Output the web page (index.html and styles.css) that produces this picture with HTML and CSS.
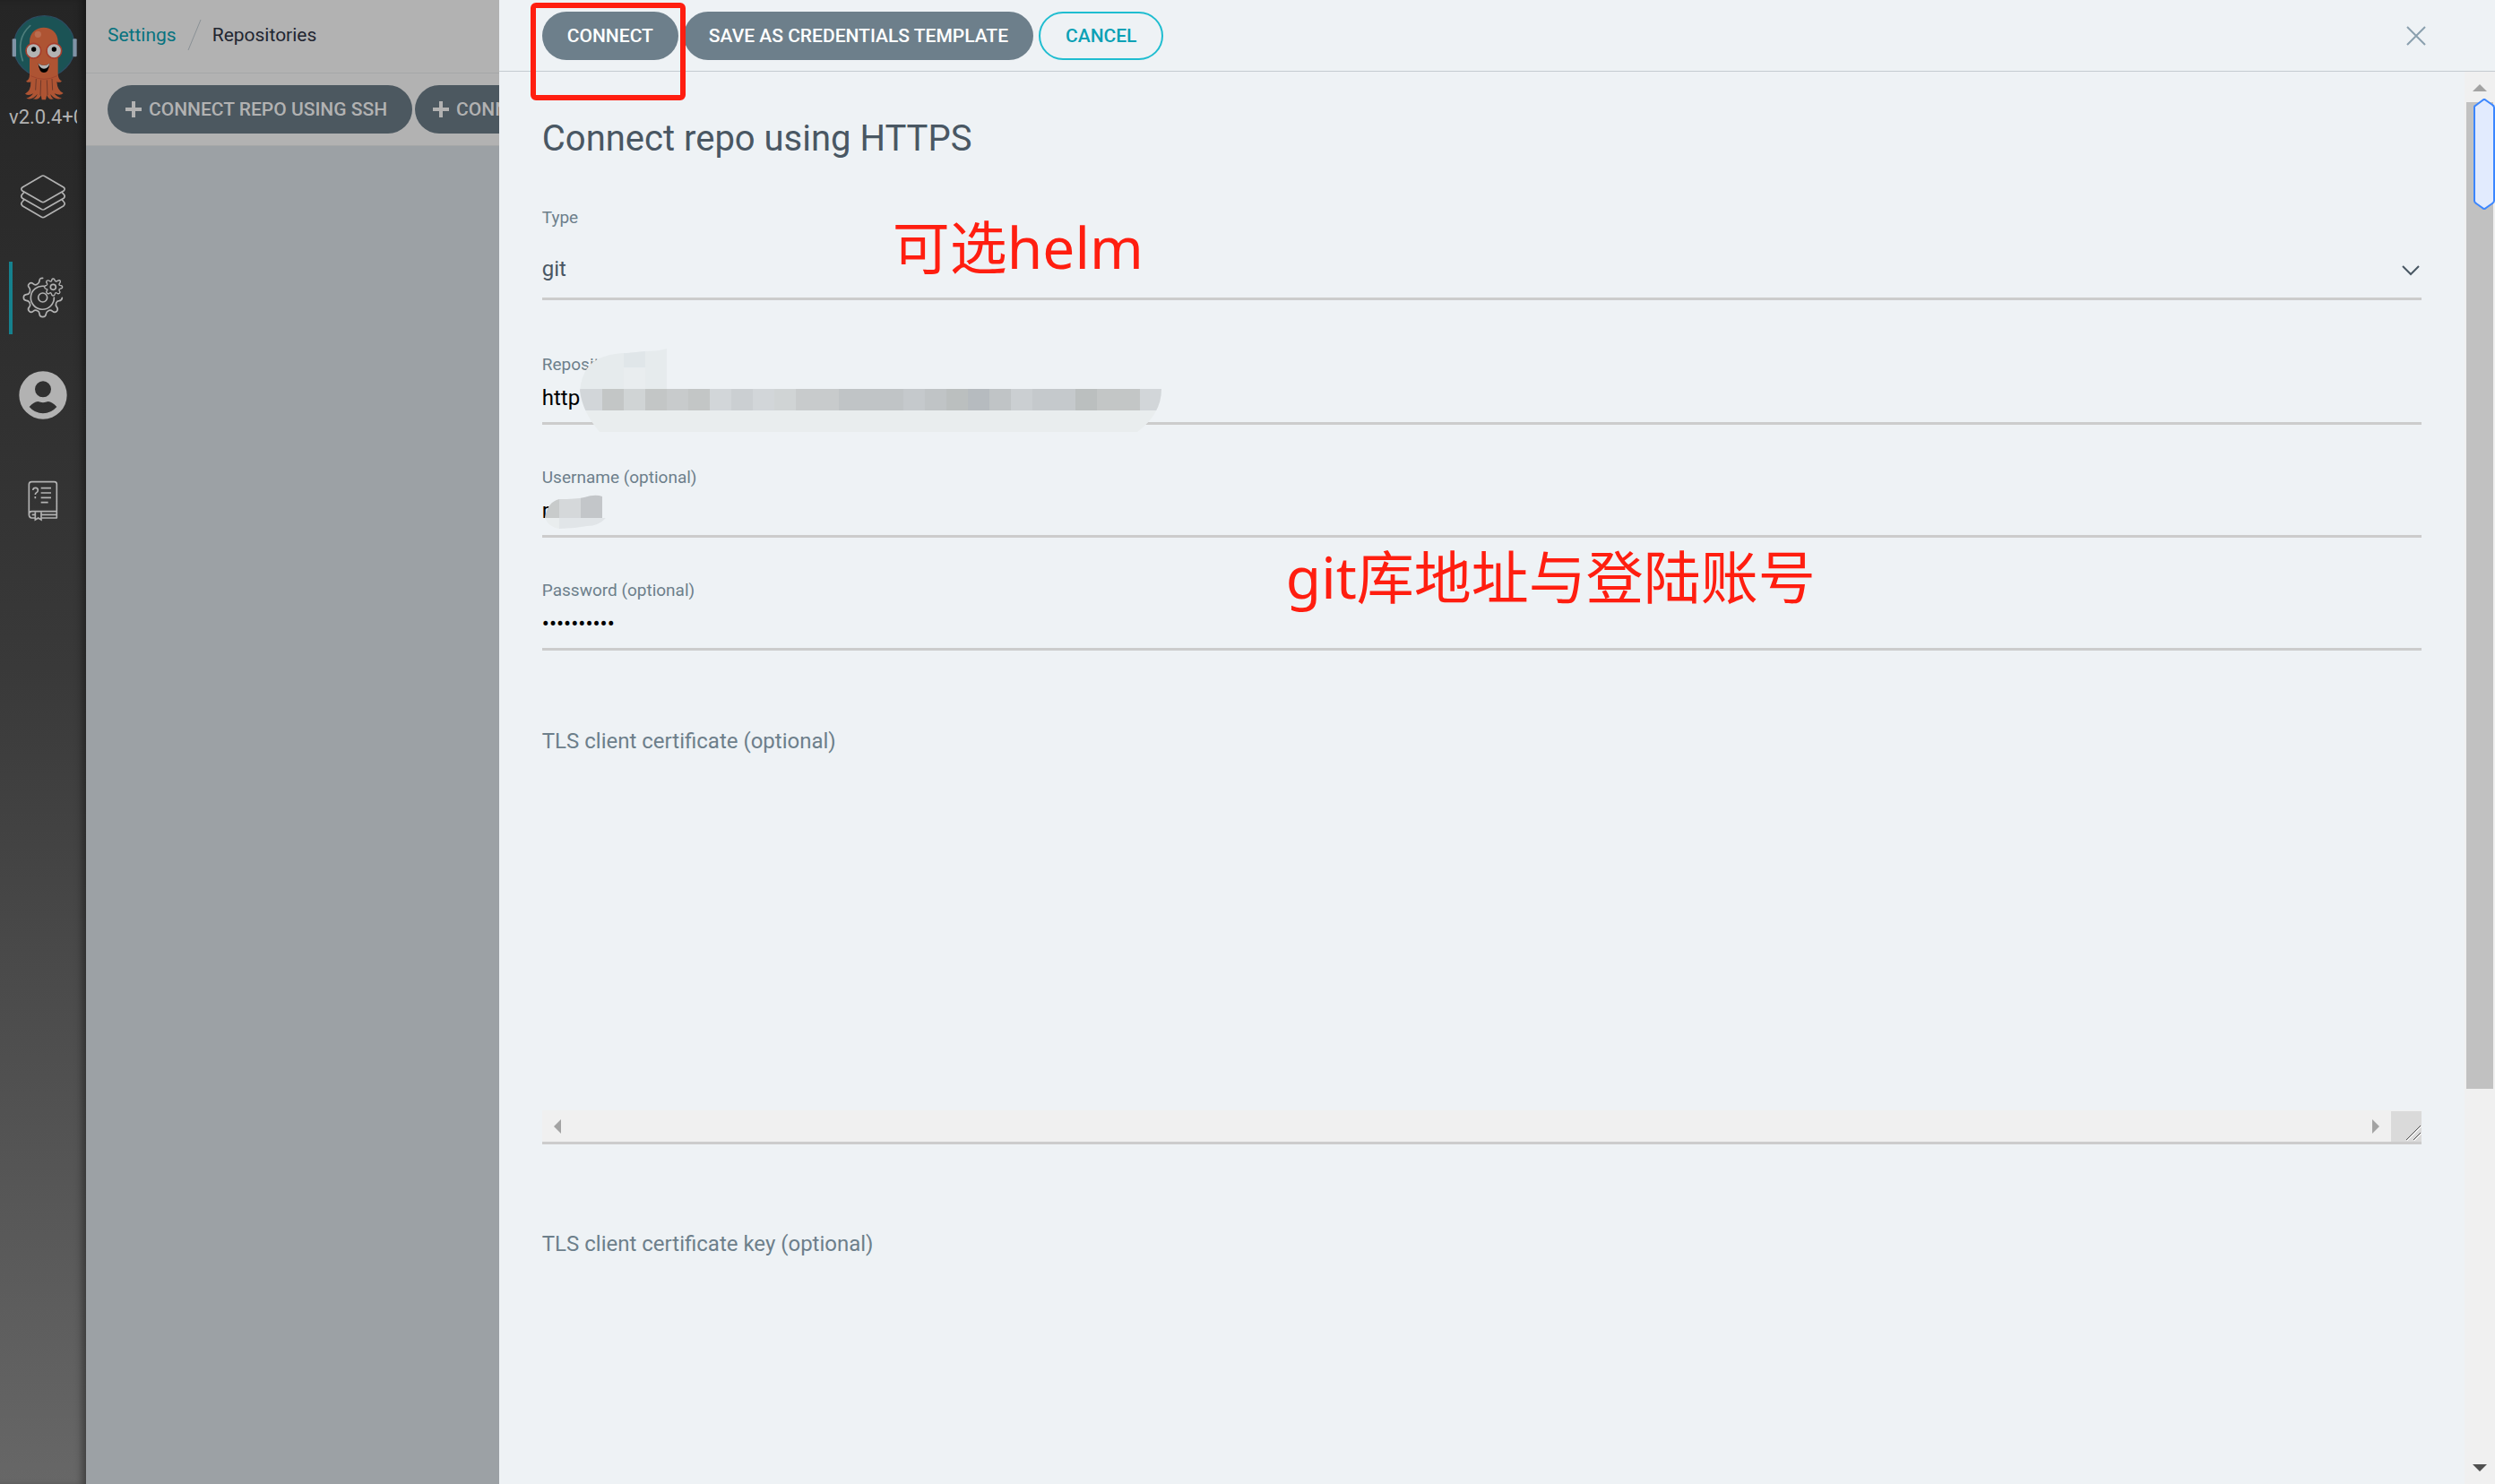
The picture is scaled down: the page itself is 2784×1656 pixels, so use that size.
FILE: index.html
```html
<!DOCTYPE html>
<html lang="en">
<head>
<meta charset="utf-8">
<title>Repositories</title>
<link rel="stylesheet" href="styles.css">
</head>
<body>
<div class="app">
  <nav class="sidebar" aria-label="Main">
    <svg class="logo" viewBox="0 0 288 345" aria-hidden="true">
      <circle cx="148" cy="155" r="102" fill="#1b5355" stroke="#2c4d62" stroke-width="4"/>
      <path d="M101 86Q52 130 76 203" fill="none" stroke="#4d7d7b" stroke-width="5" stroke-linecap="round"/>
      <rect x="41" y="130" width="13" height="60" rx="3" fill="#8093a6"/>
      <rect x="244" y="130" width="13" height="60" rx="3" fill="#8093a6"/>
      <path d="M99 140C99 76 194 76 194 140V250Q196 268 207 272Q198 278 190 274Q192 304 212 312Q203 322 182 313Q190 325 207 329Q184 337 169 315Q171 327 180 331Q162 337 157 318L153 334H140L137 318Q132 337 110 331Q122 327 125 315Q108 337 88 329Q104 325 111 313Q96 322 84 314Q104 304 103 274Q96 278 87 272Q99 268 99 250Z" fill="#ae5433"/>
      <path d="M121 264L119 302M137 268L135 318M157 268L159 318M174 264L176 302" stroke="#71392a" stroke-width="3" fill="none"/>
      <path d="M103 254Q148 276 191 254" stroke="#a0452d" stroke-width="3" fill="none"/>
      <circle cx="127" cy="115" r="11" fill="#bb6d50"/>
      <circle cx="112" cy="170" r="25" fill="#b3b3b3" stroke="#a63d2b" stroke-width="5"/>
      <circle cx="181" cy="170" r="25" fill="#b3b3b3" stroke="#a63d2b" stroke-width="5"/>
      <circle cx="113" cy="165" r="8"/><circle cx="181" cy="165" r="8"/>
      <path d="M128 212Q147 226 166 212Q163 243 147 243Q131 243 128 212Z"/>
      <path d="M128 212Q147 226 166 212Q163 229 147 230Q133 229 128 212Z" fill="#b3b3b3"/>
    </svg>
    <span class="version">v2.0.4+0</span>
    <a class="nav-item" href="#applications" aria-label="Applications">
      <svg width="52" height="52" viewBox="0 0 156 156" fill="none" stroke="#b2b2b2" stroke-width="5" stroke-linejoin="round" stroke-linecap="round" aria-hidden="true">
        <path d="M72 8Q78 4 84 8L147 45Q154 51 147 57L84 93Q78 97 72 93L9 57Q2 51 9 45Z"/>
        <path d="M14 62L9 68Q2 75 9 82L72 118Q78 122 84 118L147 82Q154 75 147 68L142 62"/>
        <path d="M14 87L9 93Q2 100 9 107L72 144Q78 148 84 144L147 107Q154 100 147 93L142 87"/>
      </svg>
    </a>
    <a class="nav-item nav-item-active" href="#settings" aria-label="Settings">
      <svg width="48" height="48" viewBox="0 0 144 144" fill="none" stroke="#b2b2b2" stroke-width="5" stroke-linejoin="round" stroke-linecap="round" aria-hidden="true">
        <path d="M71 7Q60 6 60 17Q59 25 52 28Q45 32 39 26Q32 20 26 26Q19 32 26 39Q31 46 28 53Q25 62 16 62Q7 63 7 72Q7 81 16 82Q25 83 28 91Q31 98 26 104Q19 111 26 118Q32 124 39 118Q46 112 53 116Q60 119 60 127Q61 137 71 137Q81 137 82 127Q83 119 90 116Q97 112 104 118Q111 124 118 118Q124 111 118 104Q113 97 116 90Q119 83 126 83Q135 82 136 73"/>
        <path d="M75 34A39 39 0 1 0 109 72"/>
        <circle cx="71" cy="72" r="15"/>
        <circle cx="106" cy="37" r="9"/>
        <path d="M101 16Q101 9 106 9Q111 9 112 16Q116 20 121 16Q127 12 130 17Q131 21 127 25Q124 30 129 31Q137 32 137 37Q137 42 129 43Q124 45 127 50Q131 54 127 58Q123 61 118 57Q113 54 112 60Q111 66 106 66Q101 66 100 59Q98 54 93 58Q88 61 85 57Q81 53 86 48Q88 44 82 43Q77 42 77 37Q77 32 84 31Q88 28 85 24Q81 20 85 16Q89 13 93 16Q99 20 101 16Z" stroke-width="4"/>
      </svg>
    </a>
    <a class="nav-item nav-item-user" href="#user" aria-label="User Info">
      <svg width="54" height="54" viewBox="0 0 162 162" aria-hidden="true">
        <path fill="#b2b2b2" fill-rule="evenodd" d="M81 1a80 80 0 1 1 0 160a80 80 0 1 1 0-160ZM81 34a27 27 0 1 0 0 54a27 27 0 1 0 0-54ZM35 120Q50 103 64 102Q81 109 98 102Q112 103 127 120Q108 142 81 142Q54 142 35 120Z"/>
      </svg>
    </a>
    <a class="nav-item nav-item-docs" href="#help" aria-label="Documentation">
      <svg width="34" height="46" viewBox="0 0 102 138" fill="none" stroke="#b2b2b2" stroke-width="5" aria-hidden="true">
        <path d="M25 126H12Q4 124 4 114V14Q4 5 13 5H89Q97 5 97 13V126H46M4 114Q4 104 13 104H97M44 115H95M14 115H24" stroke-linejoin="round"/>
        <path d="M25 106V132L35 126L45 132V106"/>
        <path d="M44 26H78M44 42H78M44 58H78M44 74H68"/>
        <path d="M17 33Q18 25 26 25Q34 25 34 33Q34 39 29 41Q25 43 25 48M25 54V61"/>
      </svg>
    </a>
  </nav>

  <main class="page">
    <header class="breadcrumbs">
      <a class="crumb-link" href="#settings">Settings</a>
      <svg class="crumb-slash" viewBox="0 0 16 36" aria-hidden="true"><path d="M15 1L1 35" stroke="#8a9196" fill="none"/></svg>
      <span>Repositories</span>
    </header>
    <div class="toolbar">
      <button class="btn btn-dim" type="button"><svg class="plus" viewBox="0 0 18 18" aria-hidden="true"><path d="M9 0V18M0 9H18" stroke="currentColor" stroke-width="4"/></svg>CONNECT REPO USING SSH</button>
      <button class="btn btn-dim" type="button"><svg class="plus" viewBox="0 0 18 18" aria-hidden="true"><path d="M9 0V18M0 9H18" stroke="currentColor" stroke-width="4"/></svg>CONNECT REPO USING HTTPS</button>
    </div>
  </main>
</div>

<section class="panel" aria-labelledby="panel-title">
  <header class="panel-header">
    <button class="btn btn-connect" type="submit" form="repo-form">CONNECT</button>
    <button class="btn btn-save" type="button">SAVE AS CREDENTIALS TEMPLATE</button>
    <button class="btn btn-outline" type="button">CANCEL</button>
    <button class="close" type="button" aria-label="Close"><svg width="22" height="22" viewBox="0 0 22 22" aria-hidden="true"><path d="M1 1L21 21M21 1L1 21" stroke="#8aa0ae" stroke-width="2"/></svg></button>
  </header>
  <div class="panel-body">
    <form class="form" id="repo-form">
      <h1 class="title" id="panel-title">Connect repo using HTTPS</h1>
      <div class="field field-select">
        <label for="type">Type</label>
        <div class="select-wrap">
          <select class="control" id="type"><option>git</option><option>helm</option></select>
          <svg class="chevron" viewBox="0 0 20 12" aria-hidden="true"><path d="M1 1L10 10L19 1" fill="none" stroke="#495763" stroke-width="2"/></svg>
        </div>
      </div>
      <div class="field">
        <label for="url">Repository URL</label>
        <input class="control" id="url" type="text" value="http">
        <svg class="mask mask-url" viewBox="646 386 652 98" aria-hidden="true">
          <clipPath id="url-shape"><path d="M744 389V434H1296Q1296 462 1269 482H669Q650 460 647 436Q650 405 674 398Q685 394 700 394L720 392Q735 392 744 389Z"/></clipPath>
          <g clip-path="url(#url-shape)" shape-rendering="crispEdges">
            <path fill="#e6ebed" d="M646 386h98v48h-98z"/>
            <path fill="#e0e6e9" d="M696 386h24v24h-24z"/>
            <path fill="#e9edef" d="M696 410h24v24h-24z"/>
            <path fill="#e9edee" d="M646 458h652v26H646z"/>
            <path fill="#d2d6d9" d="M646 434h26v24h-26zM792 434h24v24h-24zM840 434h24v24h-24zM1272 434h26v24h-26z"/>
            <path fill="#c3c6c6" d="M672 434h24v24h-24zM720 434h24v24h-24zM768 434h24v24h-24zM1224 434h48v24h-48z"/>
            <path fill="#d0d4d5" d="M696 434h24v24h-24zM864 434h24v24h-24z"/>
            <path fill="#c8cbcc" d="M744 434h24v24h-24zM888 434h48v24h-48z"/>
            <path fill="#cbcfd2" d="M816 434h24v24h-24zM1128 434h24v24h-24z"/>
            <path fill="#c0c4c6" d="M936 434h72v24h-72zM1032 434h24v24h-24zM1104 434h24v24h-24z"/>
            <path fill="#c5c9cc" d="M1008 434h24v24h-24zM1152 434h48v24h-48z"/>
            <path fill="#bbbfbf" d="M1056 434h24v24h-24zM1200 434h24v24h-24z"/>
            <path fill="#b6bbbf" d="M1080 434h24v24h-24z"/>
          </g>
        </svg>
      </div>
      <div class="field">
        <label for="username">Username (optional)</label>
        <input class="control" id="username" type="text" value="r">
        <svg class="mask mask-user" viewBox="606 550 74 42" aria-hidden="true">
          <clipPath id="user-shape"><path d="M608 578Q611 560 624 557Q642 557 652 555Q664 551 672 554V578H676Q668 587 655 587Q640 590 624 590Q612 588 608 578Z"/></clipPath>
          <g clip-path="url(#user-shape)" shape-rendering="crispEdges">
            <path fill="#c8cbcb" d="M606 550h18v28h-18z"/>
            <path fill="#d5d8da" d="M624 550h24v28h-24z"/>
            <path fill="#c3c6c9" d="M648 550h24v28h-24z"/>
            <path fill="#e9edee" d="M606 578h18v14h-18z"/>
            <path fill="#e1e5e8" d="M624 578h56v14h-56z"/>
          </g>
        </svg>
      </div>
      <div class="field">
        <label for="password">Password (optional)</label>
        <input class="control" id="password" type="password" value="abcdefghij">
      </div>
      <div class="field field-area">
        <label for="cert">TLS client certificate (optional)</label>
        <textarea id="cert"></textarea>
        <div class="hscroll" aria-hidden="true">
          <svg class="arrow-x" viewBox="0 0 8 16"><path d="M8 0V16L0 8Z" fill="#a3a3a3"/></svg>
          <svg class="arrow-x arrow-end" viewBox="0 0 8 16"><path d="M0 0V16L8 8Z" fill="#a3a3a3"/></svg>
          <svg class="grip" viewBox="0 0 34 34"><path d="M17 32L33 16M25 32L33 24" stroke="#555" fill="none"/><path d="M18 33L34 17M26 33L34 25" stroke="#fff" fill="none"/></svg>
        </div>
      </div>
      <div class="field field-area">
        <label for="key">TLS client certificate key (optional)</label>
        <textarea id="key"></textarea>
      </div>
    </form>
    <div class="vscroll" aria-hidden="true">
      <svg class="arrow-y" viewBox="0 0 16 8"><path d="M0 8H16L8 0Z" fill="#a3a3a3"/></svg>
      <div class="track"><div class="thumb"></div></div>
      <svg class="arrow-y" viewBox="0 0 16 8"><path d="M0 0H16L8 8Z" fill="#505050"/></svg>
      <svg class="handle" viewBox="0 0 24 124"><path d="M2 8Q1 8 1 10V114Q1 116 3 117L10 122Q12 124 14 122L21 117Q23 116 23 114V10Q23 8 21 7L14 2Q12 0 10 2Z" fill="#e2ebfe" stroke="#3b86ff" stroke-width="2"/></svg>
    </div>
  </div>
  <div class="marker" aria-hidden="true"></div>
  <p class="note note-type">可选helm</p>
  <p class="note note-account">git库地址与登陆账号</p>
</section>
</body>
</html>
```
FILE: styles.css
```css
* { box-sizing: border-box; }

body {
  margin: 0;
  height: 100vh;
  overflow: hidden;
  font: 21px/24px Roboto, "Noto Sans CJK SC", sans-serif;
  color: #495763;
}

button, input, select, textarea { font: inherit; color: inherit; margin: 0; }

.app { display: flex; min-height: 100vh; }

/* Sidebar */
.sidebar {
  flex: none;
  width: 96px;
  display: flex;
  flex-direction: column;
  background: linear-gradient(#252525, #2d2d2d 20%, #393939 45%, #676767);
  box-shadow: inset -8px 0 8px -4px rgba(0, 0, 0, .4);
}
.logo { width: 96px; height: 115px; }
.version {
  margin: 4px 10px 21px;
  overflow: hidden;
  white-space: nowrap;
  color: #b2b2b2;
  font-size: 22px;
}
.nav-item {
  position: relative;
  height: 112px;
  display: flex;
  align-items: center;
  justify-content: center;
}
.nav-item-user { height: 106px; }
.nav-item-docs { height: 130px; }
.nav-item-active::before {
  content: "";
  position: absolute;
  left: 10px;
  top: 16px;
  bottom: 15px;
  width: 4px;
  background: #15818e;
}

/* Page behind the panel */
.page { flex: 1; min-width: 0; background: #9ca1a5; }
.breadcrumbs {
  display: flex;
  align-items: center;
  gap: 12px;
  height: 82px;
  padding: 0 24px 4px;
  background: #b2b2b2;
  border-bottom: 1px solid #a5a7a8;
  color: #222631;
}
.crumb-link { color: #08727f; text-decoration: none; }
.crumb-slash { width: 16px; height: 36px; }
.toolbar {
  display: flex;
  gap: 3px;
  height: 81px;
  padding: 13px 24px;
  background: #b2b2b2;
  border-bottom: 1px solid #a5a7a8;
  overflow: hidden;
}

.btn {
  flex: none;
  display: flex;
  align-items: center;
  height: 54px;
  padding: 0 28px;
  border: 0;
  border-radius: 27px;
  font-weight: 500;
  white-space: nowrap;
}
.btn-dim { padding: 0 28px 0 20px; gap: 8px; background: #4c5860; color: #b2b2b2; }
.plus { width: 18px; height: 18px; }
.btn-connect, .btn-save { background: #6d7f8b; color: #fff; }
.btn-outline { background: none; border: 2px solid #1fbdd0; color: #0ba1b5; }

/* Sliding panel */
.panel {
  position: fixed;
  inset: 0 0 0 20%;
  display: flex;
  flex-direction: column;
  background: #eef2f5;
}
.panel-header {
  flex: none;
  display: flex;
  align-items: center;
  gap: 6px;
  height: 80px;
  padding: 1px 77px 0 48px;
  border-bottom: 1px solid #c5cbd0;
}
.close {
  margin-left: auto;
  padding: 0;
  border: 0;
  background: none;
  display: flex;
}
.panel-body { flex: 1; min-height: 0; display: flex; }

.form {
  flex: 1;
  min-width: 0;
  padding: 51px 48px 0;
  overflow: hidden;
}
.title { margin: 0 0 52px; font-size: 40px; line-height: 48px; font-weight: 400; }
.field {
  position: relative;
  display: flex;
  flex-direction: column;
  margin-bottom: 47px;
  font-size: 19px;
  color: #6d7f8b;
}
.field-select { margin-bottom: 60px; }
.control {
  width: 100%;
  height: 55px;
  padding: 0 0 2px;
  border: 0;
  border-bottom: 3px solid #ccc;
  border-radius: 0;
  outline: 0;
  background: none;
  font-size: 24px;
  line-height: 32px;
  color: #000;
}
.select-wrap { position: relative; margin-top: 13px; display: flex; }
.select-wrap .control { height: 67px; padding: 0; appearance: none; color: #495763; }
.chevron { position: absolute; right: 2px; top: 28px; width: 20px; height: 12px; }

.mask { position: absolute; }
.mask-url { left: 41px; top: -9px; width: 652px; }
.mask-user { left: 1px; top: 29px; width: 74px; }

.field-area { margin: 87px 0 97px; font-size: 24px; line-height: 28px; }
.field-area + .field-area { margin-top: 0; }
.field-area textarea {
  height: 398px;
  padding: 0;
  border: 0;
  outline: 0;
  background: none;
  resize: none;
}
.hscroll {
  display: flex;
  align-items: center;
  height: 38px;
  padding-left: 13px;
  background: #f0f0f0;
  border-bottom: 3px solid #ccc;
}
.arrow-x { width: 8px; height: 16px; }
.arrow-end { margin-left: auto; margin-right: 13px; }
.grip { width: 34px; height: 34px; background: #dadada; }

.vscroll {
  position: relative;
  flex: none;
  width: 34px;
  display: flex;
  flex-direction: column;
  align-items: center;
  padding: 14px 0;
  background: #f0f0f0;
}
.arrow-y { width: 16px; height: 8px; }
.track { flex: 1; width: 30px; margin: 12px 0; }
.thumb { height: 73%; background: #c1c1c1; }
.handle { position: absolute; right: 0; top: 30px; width: 24px; height: 124px; }

/* Red annotations drawn over the form */
.marker {
  position: absolute;
  left: 35px;
  top: 3px;
  width: 173px;
  height: 109px;
  border: 6px solid #ff1e10;
  border-radius: 6px;
}
.note {
  position: absolute;
  margin: 0;
  font: 64px/80px "Noto Sans", "Noto Sans CJK SC", sans-serif;
  color: #ff1e10;
  white-space: nowrap;
}
.note-type { left: 439px; top: 236px; }
.note-account { left: 878px; top: 604px; }
```
